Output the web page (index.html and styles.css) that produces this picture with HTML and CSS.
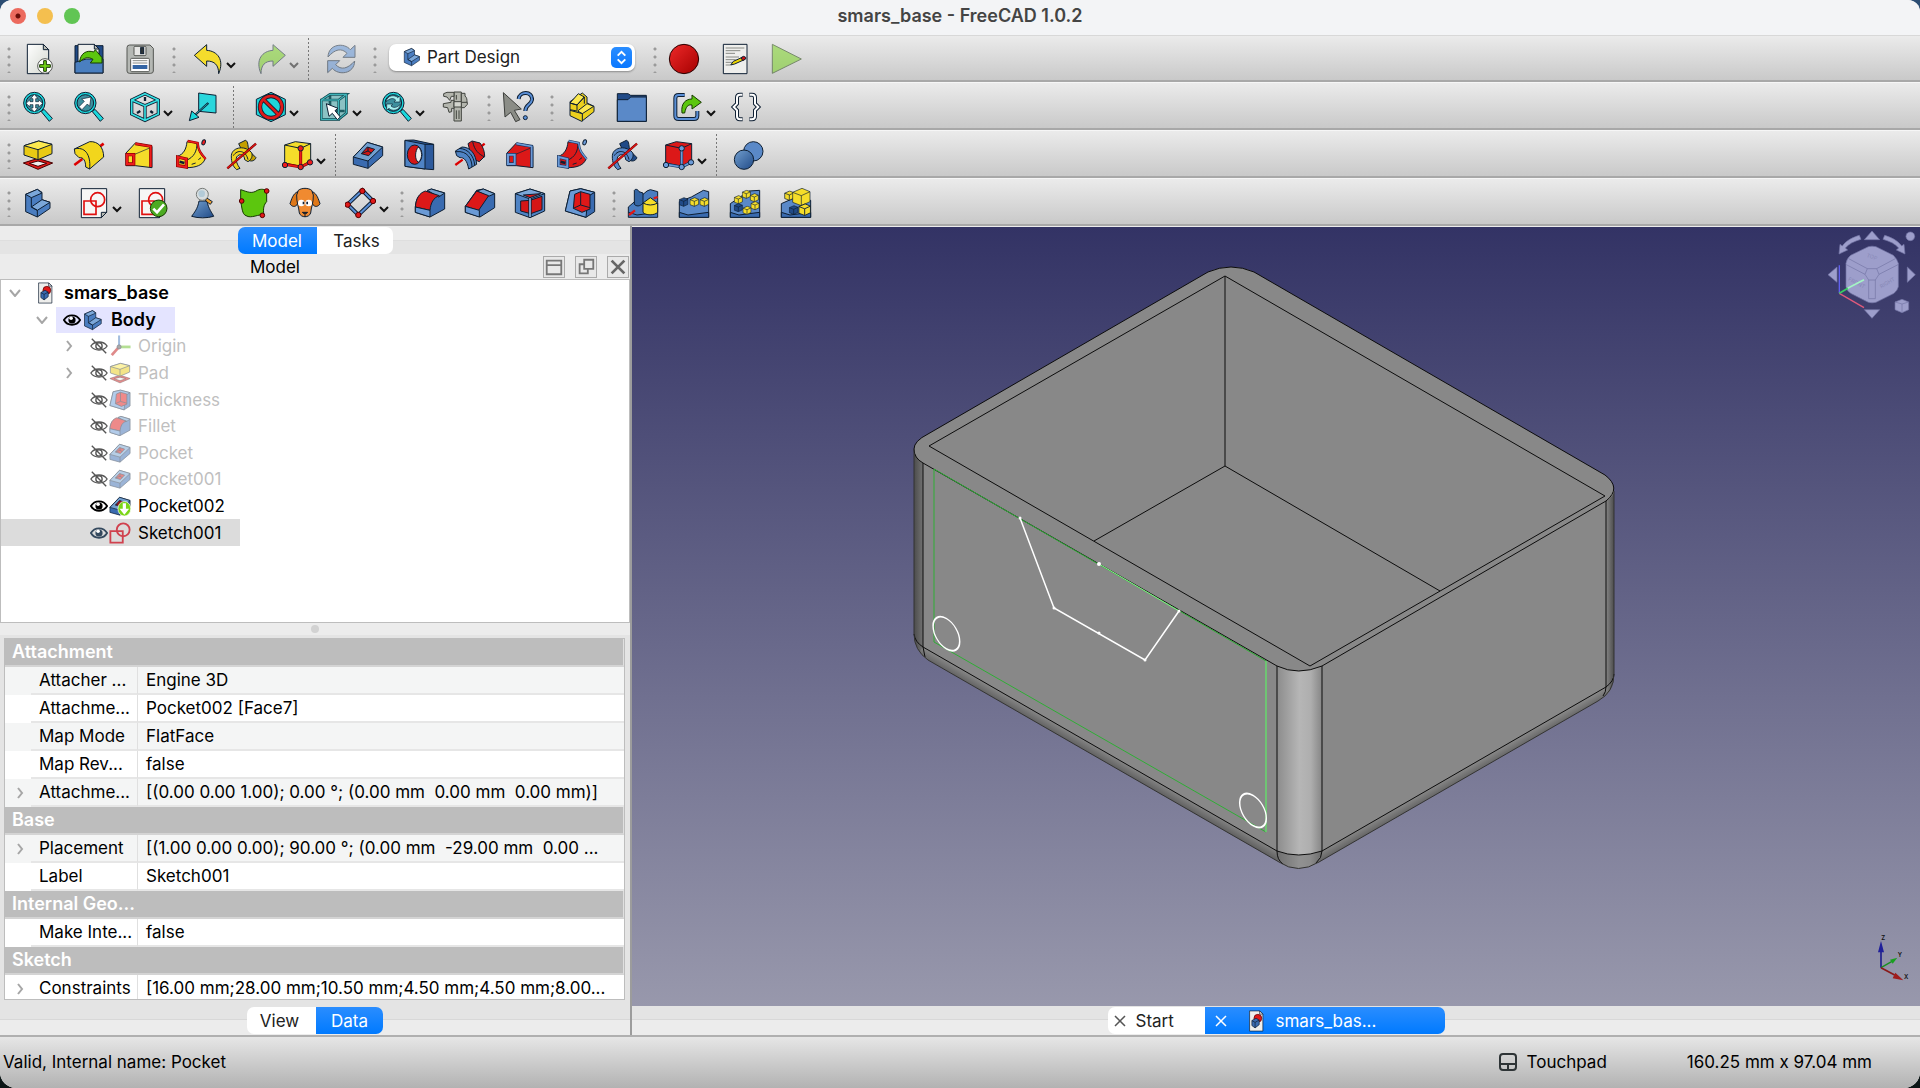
FILE: index.html
```html
<!DOCTYPE html>
<html lang="en">
<head>
<meta charset="utf-8">
<title>smars_base - FreeCAD 1.0.2</title>
<link rel="stylesheet" href="styles.css">
</head>
<body>
<svg class="sprite" aria-hidden="true">
  <defs>
    <linearGradient id="corner" x1="0" x2="1" y1="0" y2="0"><stop offset="0" stop-color="#8c8c8c"/><stop offset=".5" stop-color="#b6b6b6"/><stop offset=".75" stop-color="#aeaeae"/><stop offset="1" stop-color="#868686"/></linearGradient>
    <linearGradient id="edge-left" x1="0" x2="1" y1="0" y2="0"><stop offset="0" stop-color="#4c4c4c"/><stop offset="1" stop-color="#868686"/></linearGradient>
    <linearGradient id="edge-right" x1="0" x2="1" y1="0" y2="0"><stop offset="0" stop-color="#868686"/><stop offset="1" stop-color="#4c4c4c"/></linearGradient>
    <linearGradient id="foot-left" gradientUnits="userSpaceOnUse" x1="1100" y1="748" x2="1092" y2="762"><stop offset="0" stop-color="#888"/><stop offset="1" stop-color="#484848"/></linearGradient>
    <linearGradient id="foot-right" gradientUnits="userSpaceOnUse" x1="1462" y1="770" x2="1470" y2="784"><stop offset="0" stop-color="#888"/><stop offset="1" stop-color="#484848"/></linearGradient>
    <linearGradient id="blue" x1="0" x2="1" y1="0" y2="1"><stop offset="0" stop-color="#729fcf"/><stop offset="1" stop-color="#204a87"/></linearGradient>
    <linearGradient id="silver" x1="0" x2="1" y1="0" y2="1"><stop offset="0" stop-color="#fff"/><stop offset="1" stop-color="#d3d7cf"/></linearGradient>
    <linearGradient id="red" x1="0" x2="1" y1="0" y2="1"><stop offset="0" stop-color="#ef2929"/><stop offset="1" stop-color="#a40000"/></linearGradient>
  </defs>

  <symbol id="new" viewBox="0 0 96 96"><path d="M16 4H64L80 20V92H16Z" fill="url(#silver)"/><path d="M64 4V20H80Z" fill="#babdb6"/><circle cx="69" cy="69" r="22" fill="#fff" stroke="#555753"/><path d="M65 53h8v12h12v8H73v12h-8V73H53v-8h12Z" fill="#73d216" stroke="#173a00"/></symbol>
  <symbol id="open" viewBox="0 0 96 96"><path d="M6 8H90V90H6Z" fill="#204a87"/><path d="M15 4H64L78 18V60H15Z" fill="#eeeeec"/><path d="M64 4V18H78Z" fill="#babdb6"/><path d="M6 58L40 48H90V90H6Z" fill="#4a7fc0"/><path d="M20 57C22 30 42 20 62 27L67 20 87 44V60H52L60 49C46 40 32 44 20 57Z" fill="#5cc60e" stroke="#173a00"/></symbol>
  <symbol id="save" viewBox="0 0 96 96"><path d="M9 14Q9 6 17 6H78L88 16V84Q88 91 80 91H17Q9 91 9 84Z" fill="#b5b8b4" stroke="#555753"/><rect x="30" y="10" width="36" height="28" rx="3" fill="#e6e6e4" stroke="#555753"/><rect x="50" y="14" width="9" height="18" fill="#2e3436"/><rect x="20" y="46" width="56" height="40" rx="3" fill="#fff" stroke="#555753"/><path d="M26 53H70M26 60H70" stroke="#888a85"/><path d="M26 66H70V78H26Z" fill="#3465a4" stroke="none"/></symbol>
  <symbol id="undo" viewBox="0 0 96 96"><path d="M7 37L44 5V22C76 24 98 50 80 92C80 66 68 54 44 54V70Z" fill="#f4dc2c"/></symbol>
  <symbol id="redo" viewBox="0 0 96 96"><path d="M91 37L54 5V22C22 24 0 50 18 92C18 66 30 54 54 54V70Z" fill="#73d216"/></symbol>
  <symbol id="refresh" viewBox="0 0 96 96"><path d="M9 42C10 2 58-2 76 20L90 7V43H54L66 31C50 14 30 18 9 42Z" fill="#5a8fd6"/><path d="M9 42C10 2 58-2 76 20L90 7V43H54L66 31C50 14 30 18 9 42Z" transform="rotate(180 49 48)" fill="#5a8fd6"/></symbol>
  <symbol id="record" viewBox="0 0 96 96"><circle cx="48" cy="48" r="44" fill="url(#red)" stroke="#280000"/></symbol>
  <symbol id="macro" viewBox="0 0 96 96"><path d="M13 4H84V92H13Z" fill="#eeeeec"/><path d="M20 15H76M20 23H64M20 31H48M20 42H60M20 50H50M20 58H40M20 66H34" stroke="#888a85"/><path d="M35 66L43 55 72 42 76 50 47 63Z" fill="#edd400"/><path d="M66 44L74 40 80 43V48L71 53Z" fill="#cc1010"/></symbol>
  <symbol id="play" viewBox="0 0 96 96"><path d="M7 4L94 48 7 91Z" fill="#73d216" stroke="#173a00"/></symbol>

  <symbol id="lens" viewBox="0 0 96 96"><path d="M58 62L66 55 91 82 82 91Z" fill="#1ad8dc"/><circle cx="37" cy="36" r="32" fill="#1ad8dc"/><circle cx="37" cy="36" r="25" fill="#3d8f9e"/></symbol>
  <symbol id="fit-all" viewBox="0 0 96 96"><use href="#lens"/><path d="M37 10L48 23H41V32H50V26L62 37 50 48V41H41V51H48L37 63 26 51H33V41H24V48L12 37 24 26V32H33V23H26Z" fill="#fff" stroke-width="2"/></symbol>
  <symbol id="fit-sel" viewBox="0 0 96 96"><use href="#lens"/><path d="M18 47L34 31 26 24 54 18 50 46 43 39 27 56Z" fill="#fff" stroke-width="2"/></symbol>
  <symbol id="iso" viewBox="0 0 96 96"><g fill="none" stroke-width="10"><path d="M48 8L88 27V69L48 88 8 69V27ZM8 27L48 44 88 27M48 44V88"/></g><g fill="none" stroke="#34e0e2" stroke-width="5"><path d="M48 8L88 27V69L48 88 8 69V27ZM8 27L48 44 88 27M48 44V88"/></g><path d="M48 18V30M24 66L34 60M64 60L72 66" stroke-width="7"/></symbol>
  <symbol id="go-link" viewBox="0 0 96 96"><path d="M35 6L87 13V66L35 61Z" fill="#2ad6dc"/><path d="M64 36L24 72" stroke-width="7"/><path d="M62 38L24 71" stroke="#2ad6dc" stroke-width="2"/><path d="M7 89L14 60 36 79Z" fill="#1ad8dc"/></symbol>
  <symbol id="style" viewBox="0 0 96 96"><path d="M48 4L91 25V71L48 92 4 71V25Z" fill="#1fd5da"/><circle cx="48" cy="48" r="33" fill="none" stroke-width="13"/><path d="M26 26L70 70" stroke-width="13"/><circle cx="48" cy="48" r="33" fill="none" stroke="#dd1a1a" stroke-width="8"/><path d="M26 26L70 70" stroke="#dd1a1a" stroke-width="8"/></symbol>
  <symbol id="bbox" viewBox="0 0 96 96"><path d="M8 26L36 7H87V68L64 87H8Z" fill="#8bc2c4" stroke-width="2"/><g fill="none" stroke-width="8" stroke="#1c5a60"><path d="M10 27H62V85H10ZM10 27L36 10H85L62 27M85 10V66L62 85M36 12V60H80"/></g><g fill="none" stroke-width="3" stroke="#46c5ca"><path d="M10 27H62V85H10ZM10 27L36 10H85L62 27M85 10V66L62 85"/></g><path d="M25 38L60 52 51 59 67 78 58 86 43 67 33 76Z" fill="#fff"/></symbol>
  <symbol id="sync" viewBox="0 0 96 96"><use href="#lens"/><g fill="#a6f0f0" stroke-width="2"><path d="M16 32C18 12 42 10 50 20L57 14V33H39L44 27C36 20 26 22 16 32Z"/><path d="M16 32C18 12 42 10 50 20L57 14V33H39L44 27C36 20 26 22 16 32Z" transform="rotate(180 37 36)"/></g></symbol>
  <symbol id="caliper" viewBox="0 0 96 96"><g fill="#b4b6ae" stroke="#41443f"><path d="M45 3H67V90H45Z"/><path d="M14 8L24 4H45V16H37L32 28 24 18 14 16Z"/><path d="M67 7H78V15C84 20 84 26 84 34L76 38H67Z"/><path d="M13 38L36 34V28H45V52H38V62L30 64 26 50 13 48Z"/><path d="M67 34H85V40L76 50H67Z"/><path d="M45 32H67V48H45Z" fill="#d3d5ce"/></g><path d="M52 12V26M52 58V84M60 58V84" stroke="#41443f"/></symbol>
  <symbol id="part" viewBox="0 0 96 96"><path d="M15 32L52 6 66 18V36L87 46V62L50 91 15 74Z" fill="#ecd01c"/><path d="M15 36L40 8 58 18 36 42ZM38 60L66 38 86 46 52 68Z" fill="#fce94f"/><path d="M15 36L36 42V58M36 42L58 18V38M15 58L52 68V91M15 56L36 60" fill="none"/></symbol>
  <symbol id="folder" viewBox="0 0 96 96"><path d="M4 8H36L44 13H91V91H4Z" fill="#204a87"/><path d="M4 26H36L44 18H91V91H4Z" fill="#5a89c8"/></symbol>
  <symbol id="link" viewBox="0 0 96 96"><path d="M38 12H20Q10 12 10 22V74Q10 84 20 84H66Q76 84 76 74V60" fill="none" stroke-width="12"/><path d="M38 12H20Q10 12 10 22V74Q10 84 20 84H66Q76 84 76 74V60" fill="none" stroke="#5a8fd6" stroke-width="6"/><path d="M30 66C26 36 42 24 60 24V12L88 34 60 54V42C48 40 42 46 38 66Z" fill="#5cc60e" stroke="#173a00"/></symbol>

  <symbol id="pad" viewBox="0 0 96 96"><path d="M4 72L48 58 92 72 48 91Z" fill="#e01818" stroke="#400"/><path d="M22 73L48 66 74 73 48 82Z" fill="#eee" stroke="#400"/><path d="M6 20L50 6 90 16V44L48 62 6 48Z" fill="#e9ca14"/><path d="M6 20L50 6 90 16 48 32Z" fill="#fce94f"/><path d="M48 32V62"/></symbol>
  <symbol id="revolve" viewBox="0 0 96 96"><path d="M92 14L62 36" stroke="#d00" stroke-width="8"/><path d="M4 30L50 8C76 6 92 26 92 54L50 90L38 84C38 66 32 54 18 56L6 44Z" fill="#f2d61c"/><path d="M4 30C34 22 54 44 50 90" fill="none"/><path d="M4 78L28 60" stroke="#d00" stroke-width="8"/></symbol>
  <symbol id="loft" viewBox="0 0 96 96"><path d="M6 42L34 12 84 22V86L34 80H6Z" fill="var(--body)"/><path d="M32 46L84 24" stroke-width="2"/><path d="M34 14L80 22V84" fill="none" stroke="var(--rim-dark)" stroke-width="9"/><path d="M34 14L80 22V84" fill="none" stroke="var(--rim)" stroke-width="5"/><path d="M9 47H29V75H9Z" fill="var(--body)" stroke="var(--rim-dark)" stroke-width="10"/><path d="M9 47H29V75H9Z" fill="none" stroke="var(--rim)" stroke-width="6"/></symbol>
  <symbol id="pipe" viewBox="0 0 96 96"><path d="M7 52C26 46 34 30 36 8L66 12C70 36 78 46 90 60C84 78 64 86 34 86L6 80Z" fill="var(--body)"/><path d="M34 64C58 54 66 36 66 12M50 76L62 72M70 62L78 56" fill="none"/><path d="M38 6L68 12C70 36 78 44 92 60" fill="none" stroke="var(--rim-dark)" stroke-width="7"/><path d="M38 6L68 12C70 36 78 44 92 60" fill="none" stroke="var(--rim)" stroke-width="4"/><path d="M8 54L34 60V84L8 80Z" fill="var(--body)" stroke="var(--rim-dark)" stroke-width="10"/><path d="M8 54L34 60V84L8 80Z" fill="none" stroke="var(--rim)" stroke-width="6"/><path d="M14 68L28 72" stroke-width="8"/><ellipse cx="86" cy="10" rx="5" ry="8" transform="rotate(20 86 10)" fill="var(--rim)"/></symbol>
  <symbol id="helix" viewBox="0 0 96 96"><path d="M38 14L58 4C68 6 64 24 70 36L90 56C86 66 76 68 68 64L58 40C48 34 42 24 38 14Z" fill="var(--coil-dark)"/><path d="M16 54C14 26 54 16 76 40C82 50 76 62 66 68L56 62C56 46 40 42 32 54C28 64 34 78 42 88L32 92C20 82 16 68 16 54Z" fill="var(--coil)"/><path d="M22 50C34 30 60 34 66 62" fill="none"/><path d="M4 88L90 14" stroke="#6a0000" stroke-width="7"/><path d="M4 88L90 14" stroke="#e21515" stroke-width="4"/></symbol>
  <symbol id="prim" viewBox="0 0 96 96"><path d="M8 18L40 8 86 14V66L56 82 8 72Z" fill="var(--body)"/><path d="M8 18L56 28 86 14M56 28V82" fill="none"/><path d="M9 76L56 84 84 70M56 26V84" fill="none" stroke="var(--rim-dark)" stroke-width="9"/><path d="M9 76L56 84 84 70M56 26V84" fill="none" stroke="var(--rim)" stroke-width="5"/><g fill="var(--rim)"><circle cx="9" cy="78" r="8"/><circle cx="56" cy="84" r="8"/><circle cx="84" cy="70" r="8"/><circle cx="56" cy="28" r="8"/></g></symbol>
  <symbol id="pocket" viewBox="0 0 96 96"><path d="M4 54L46 10 92 24V50L48 88 4 76Z" fill="#3a6bb0"/><path d="M4 54L46 10 92 24 48 66Z" fill="#729fcf"/><path d="M48 66V88"/><path d="M28 44L46 24 68 31 50 50Z" fill="#d01414"/><path d="M48 24V36L28 44M48 36L58 42" fill="none"/></symbol>
  <symbol id="hole" viewBox="0 0 96 96"><path d="M6 4L32 3 92 16V92L66 90 6 82Z" fill="#2d5a9c"/><path d="M6 4L66 16V90L6 82Z" fill="#4f83c4"/><path d="M66 16H92"/><ellipse cx="35" cy="47" rx="22" ry="29" fill="#d51616"/><path d="M46 24C36 34 34 62 46 70C60 58 58 34 46 24Z" fill="#eee"/></symbol>
  <symbol id="groove" viewBox="0 0 96 96"><path d="M92 14L70 32" stroke="#d00" stroke-width="7"/><path d="M42 14L54 6 78 12C88 24 92 40 92 52L76 68C68 64 60 62 54 60Z" fill="#d51616"/><path d="M56 8C62 34 72 44 92 54" fill="none"/><path d="M4 36L24 24C50 24 66 46 68 76L44 90C40 66 30 54 18 56L8 50Z" fill="#4f83c4"/><path d="M6 38C40 34 54 60 54 84M16 28C44 30 60 52 62 78" fill="none"/><path d="M4 78L26 62" stroke="#d00" stroke-width="7"/></symbol>
  <symbol id="boolean" viewBox="0 0 96 96"><circle cx="61" cy="37" r="29" fill="#5a89c8"/><circle cx="33" cy="62" r="29" fill="url(#blue)"/></symbol>

  <symbol id="body" viewBox="0 0 96 96"><path d="M11 22L46 7 60 16V38L84 46V64L46 90 11 74Z" fill="#4a7dc0"/><path d="M11 22L28 32 60 18 46 7ZM28 60L60 38 84 46 46 70Z" fill="#7ba7d9"/><path d="M28 32V60L46 70V90" fill="none"/></symbol>
  <symbol id="sheet" viewBox="0 0 96 96"><path d="M10 5H86V76L70 92H10Z" fill="#f6f6f5"/><path d="M70 92V76H86Z" fill="#babdb6"/><path d="M18 42H54V82H18Z" fill="none" stroke="#e01010" stroke-width="5"/><circle cx="59" cy="38" r="21" fill="none" stroke="#e01010" stroke-width="5"/></symbol>
  <symbol id="check-sketch" viewBox="0 0 96 96"><use href="#sheet"/><circle cx="68" cy="64" r="25" fill="#4cab22" stroke="#173a00"/><path d="M52 65L63 76 84 52" fill="none" stroke="#fff" stroke-width="8"/></symbol>
  <symbol id="map" viewBox="0 0 96 96"><path d="M36 42H60C64 66 76 78 80 88C60 94 34 94 14 88C22 76 32 66 36 42Z" fill="url(#blue)"/><path d="M58 32L76 44 70 52 56 42Z" fill="#f0a030"/><circle cx="46" cy="22" r="18" fill="#d8dee0" stroke="#777b78"/><circle cx="44" cy="20" r="10" fill="#b3cbd8" stroke="none"/></symbol>
  <symbol id="binder" viewBox="0 0 96 96"><path d="M8 8C28 14 40 22 58 10C70 4 80 8 86 10V44C78 52 74 66 78 84C62 80 40 96 24 86C12 82 12 60 8 44Z" fill="#5cc60e" stroke="#173a00"/><g fill="#e01818" stroke="#500"><circle cx="86" cy="12" r="7"/><circle cx="11" cy="42" r="7"/><circle cx="73" cy="85" r="7"/></g></symbol>
  <symbol id="clone" viewBox="0 0 96 96"><path d="M26 14C12 20 8 36 3 50C8 60 20 62 26 50ZM70 14C84 20 88 36 93 50C88 60 76 62 70 50Z" fill="#e07818"/><path d="M28 10C38 2 58 2 68 10L73 24C74 46 66 62 65 78C60 93 36 93 31 78C30 62 22 46 23 24Z" fill="#f08a30"/><g fill="#fff" stroke="none"><circle cx="37" cy="48" r="10"/><circle cx="59" cy="48" r="10"/></g><path d="M41 48h5M52 48h5" stroke-width="7"/><path d="M40 76Q48 86 56 76ZM48 82V90" fill="#3a1a00"/></symbol>
  <symbol id="datum" viewBox="0 0 96 96"><path d="M8 52L52 10 84 42 40 84Z" fill="none" stroke-width="12"/><path d="M8 52L52 10 84 42 40 84Z" fill="none" stroke="#5a8fd6" stroke-width="6"/><g fill="#e01818" stroke="#500"><circle cx="8" cy="53" r="8"/><circle cx="52" cy="12" r="8"/><circle cx="84" cy="42" r="8"/><circle cx="40" cy="84" r="8"/></g></symbol>
  <symbol id="fillet" viewBox="0 0 96 96"><path d="M4 60C6 34 16 20 30 18L52 6 92 18V66L48 90 4 76Z" fill="#3a6bb0"/><path d="M40 10L52 6 92 18 74 30Z" fill="#729fcf"/><path d="M4 60C6 34 16 18 34 12L76 26C58 32 50 48 48 70Z" fill="#dc1818"/><path d="M4 60L48 70V90L4 76Z" fill="#6a9ad6"/></symbol>
  <symbol id="chamfer" viewBox="0 0 96 96"><path d="M4 58L38 10 58 6 92 20V62L48 90 4 76Z" fill="#3a6bb0"/><path d="M38 12L58 6 92 20 74 28Z" fill="#729fcf"/><path d="M4 58L38 12 74 26 44 70Z" fill="#dc1818"/><path d="M4 58L46 70V90L4 76Z" fill="#6a9ad6"/></symbol>
  <symbol id="draft" viewBox="0 0 96 96"><path d="M4 20L48 6 92 20V72L48 92 4 76Z" fill="#4f83c4"/><path d="M20 42L48 40 84 28V68L50 80 20 72Z" fill="#d51616"/><path d="M4 20L48 36 92 20 48 6Z" fill="#7ba7d9"/><path d="M28 24L80 20 48 32Z" fill="#d51616"/><path d="M48 36V90" stroke-width="10"/><path d="M48 34V90" stroke="#8cb4e0" stroke-width="5"/></symbol>
  <symbol id="thickness" viewBox="0 0 96 96"><path d="M18 12L50 5 92 16V74L66 91 4 72Z" fill="#3a6bb0"/><path d="M18 12L50 5 92 16 72 28L66 91 4 72Z" fill="#6a9ad6"/><path d="M32 22L50 14 78 22V66L54 76 28 64Z" fill="#e01818"/><path d="M50 14V54L28 64M50 54L78 62" fill="none"/></symbol>
  <symbol id="mirror" viewBox="0 0 96 96"><path d="M4 60L60 12 70 8 92 14V91H4Z" fill="#4a7dc0"/><path d="M4 76L30 84 92 76" fill="none"/><path d="M22 10C26 4 34 8 36 14L48 18V48C38 60 28 58 22 52Z" fill="#3465a4"/><path d="M6 84L24 70M80 34L92 30" stroke="#e01818" stroke-width="7"/><path d="M48 48L70 32 92 48V76C82 86 56 86 48 76Z" fill="#f5dd2a"/><path d="M48 48Q70 60 92 48" fill="none"/></symbol>
  <symbol id="cube" viewBox="0 0 30 30"><path d="M2 8L16 2 28 7V22L15 28 2 23Z"/><path d="M2 8L15 13 28 7M15 13V28" fill="none"/></symbol>
  <symbol id="linear" viewBox="0 0 96 96"><path d="M4 44L40 30 76 10 92 14V91H4Z" fill="#5a89c8"/><path d="M4 76L30 84 92 76V91H4Z" fill="#3a6bb0"/><g stroke-width="2"><use href="#cube" x="2" y="30" width="30" height="30" fill="#204a87"/><use href="#cube" x="34" y="30" width="30" height="30" fill="#f5dd2a"/><use href="#cube" x="64" y="30" width="30" height="30" fill="#f5dd2a"/></g></symbol>
  <symbol id="polar" viewBox="0 0 96 96"><path d="M4 50L60 12 92 10V91H4Z" fill="#5a89c8"/><path d="M4 76L30 84 92 76V91H4Z" fill="#3a6bb0"/><g fill="#f5dd2a" stroke-width="2"><use href="#cube" x="38" y="8" width="28" height="28"/><use href="#cube" x="14" y="24" width="28" height="28"/><use href="#cube" x="62" y="18" width="28" height="28"/><use href="#cube" x="64" y="42" width="28" height="28"/><use href="#cube" x="40" y="56" width="28" height="28"/><use href="#cube" x="14" y="48" width="28" height="28" fill="#204a87"/></g></symbol>
  <symbol id="multi" viewBox="0 0 96 96"><path d="M4 50L40 34 92 40V91H4Z" fill="#5a89c8"/><path d="M4 76L30 84 92 76V91H4Z" fill="#3a6bb0"/><g fill="#f5dd2a" stroke-width="2"><use href="#cube" x="12" y="10" width="32" height="32"/><use href="#cube" x="34" y="0" width="60" height="60" stroke-width="1"/><use href="#cube" x="54" y="48" width="40" height="40"/><use href="#cube" x="26" y="54" width="30" height="30" fill="#204a87"/></g></symbol>

  <symbol id="doc" viewBox="0 0 96 96"><path d="M20 4H64L78 18V92H20Z" fill="#eeeeec"/><path d="M64 4V18H78Z" fill="#fff"/><circle cx="56" cy="36" r="17" fill="#e01818" stroke="#500"/><path d="M30 46L48 36 62 44V64L44 78 30 68Z" fill="#3a6bb0"/><path d="M30 46L44 54 62 44M44 54V78" fill="none"/></symbol>
  <symbol id="origin" viewBox="0 0 96 96"><path d="M44 52V2" stroke="#4a7dc0" stroke-width="9"/><path d="M44 52H94" stroke="#6cc02c" stroke-width="12"/><path d="M44 52L12 88" stroke="#c01818" stroke-width="12"/><circle cx="44" cy="52" r="9" fill="#555"/></symbol>
  <symbol id="tip" viewBox="0 0 96 96"><use href="#pocket"/><ellipse cx="67" cy="60" rx="28" ry="32" fill="#7bd616" stroke="#fff"/><path d="M60 36H74V60H88L67 86 46 60H60Z" fill="#fff" stroke="none"/></symbol>
  <symbol id="sketch" viewBox="0 0 96 96"><path d="M6 40H60V90H6Z" fill="none" stroke="#d0414e" stroke-width="8"/><circle cx="62" cy="34" r="28" fill="none" stroke="#d0414e" stroke-width="8"/></symbol>
  <symbol id="eye" viewBox="0 0 20 16"><path d="M1 8C5 1 15 1 19 8C15 15 5 15 1 8Z" fill="none" stroke="currentColor" stroke-width="2"/><circle cx="10" cy="8" r="4" fill="currentColor" stroke="none"/><circle cx="9" cy="6" r="2" fill="#fff" stroke="none"/></symbol>
  <symbol id="eye-off" viewBox="0 0 20 16"><path d="M1 8C5 2 15 2 19 8C15 14 5 14 1 8Z" fill="none" stroke="#555" stroke-width="1.5"/><circle cx="10" cy="8" r="3.5" fill="none" stroke="#555" stroke-width="1.5"/><path d="M2 0L18 16" stroke="#555" stroke-width="1.5"/></symbol>
  <symbol id="down" viewBox="0 0 10 8"><path d="M1 2L5 6 9 2" fill="none" stroke="currentColor" stroke-width="2"/></symbol>
  <symbol id="right" viewBox="0 0 8 12"><path d="M2 1L6 6 2 11" fill="none" stroke="#a6a6a6" stroke-width="2"/></symbol>
  <symbol id="open-branch" viewBox="0 0 12 8"><path d="M1 1L6 7 11 1" fill="none" stroke="#a6a6a6" stroke-width="2"/></symbol>
  <symbol id="close" viewBox="0 0 12 12"><path d="M1 1L11 11M11 1L1 11" fill="none" stroke="currentColor" stroke-width="1.5"/></symbol>
</svg>

<div class="window">
  <header class="titlebar">
    <div class="lights">
      <button class="light light-close" aria-label="Close window"></button>
      <button class="light light-min" aria-label="Minimize window"></button>
      <button class="light light-max" aria-label="Zoom window"></button>
    </div>
    <h1>smars_base - FreeCAD 1.0.2</h1>
  </header>

  <div class="toolbars">
    <div class="bar">
      <i class="grip"></i>
      <button class="tool" aria-label="New"><svg><use href="#new"/></svg></button>
      <button class="tool" aria-label="Open"><svg><use href="#open"/></svg></button>
      <button class="tool" aria-label="Save"><svg><use href="#save"/></svg></button>
      <i class="grip"></i>
      <button class="tool drop" aria-label="Undo"><svg><use href="#undo"/></svg><svg class="caret"><use href="#down"/></svg></button>
      <button class="tool drop off" aria-label="Redo" disabled><svg><use href="#redo"/></svg><svg class="caret"><use href="#down"/></svg></button>
      <i class="rule"></i>
      <button class="tool off" aria-label="Refresh" disabled><svg><use href="#refresh"/></svg></button>
      <i class="grip"></i>
      <div class="workbench">
        <svg class="workbench-icon"><use href="#body"/></svg>
        <select aria-label="Workbench"><option>Part Design</option></select>
        <span class="stepper"><svg viewBox="0 0 22 22"><path d="M7 9L11 5 15 9M7 13L11 17 15 13" fill="none" stroke="#fff" stroke-width="2"/></svg></span>
      </div>
      <i class="grip"></i>
      <button class="tool" aria-label="Record macro"><svg><use href="#record"/></svg></button>
      <button class="tool" aria-label="Macros"><svg><use href="#macro"/></svg></button>
      <button class="tool off" aria-label="Execute macro" disabled><svg><use href="#play"/></svg></button>
    </div>
    <div class="bar">
      <i class="grip"></i>
      <button class="tool" aria-label="Fit all"><svg><use href="#fit-all"/></svg></button>
      <button class="tool" aria-label="Fit selection"><svg><use href="#fit-sel"/></svg></button>
      <button class="tool drop" aria-label="Isometric"><svg><use href="#iso"/></svg><svg class="caret"><use href="#down"/></svg></button>
      <button class="tool" aria-label="Go to linked object"><svg><use href="#go-link"/></svg></button>
      <i class="rule"></i>
      <button class="tool drop" aria-label="Draw style"><svg><use href="#style"/></svg><svg class="caret"><use href="#down"/></svg></button>
      <button class="tool drop" aria-label="Selection view"><svg><use href="#bbox"/></svg><svg class="caret"><use href="#down"/></svg></button>
      <button class="tool drop" aria-label="Sync view"><svg><use href="#sync"/></svg><svg class="caret"><use href="#down"/></svg></button>
      <button class="tool" aria-label="Measure"><svg><use href="#caliper"/></svg></button>
      <i class="grip"></i>
      <button class="tool" aria-label="What's this?"><svg viewBox="0 0 96 96"><path d="M4 5L58 54 37 58 54 86 41 92 26 64 9 78Z" fill="#8b8d87" stroke="#3c3e3b"/><path d="M50 24C52 0 92 0 90 26C88 42 70 40 70 60" fill="none" stroke-width="12"/><path d="M50 24C52 0 92 0 90 26C88 42 70 40 70 60" fill="none" stroke="#5a8fd6" stroke-width="6"/><circle cx="70" cy="80" r="6" fill="#5a8fd6"/></svg></button>
      <i class="grip"></i>
      <button class="tool" aria-label="Create part"><svg><use href="#part"/></svg></button>
      <button class="tool" aria-label="Create group"><svg><use href="#folder"/></svg></button>
      <button class="tool drop" aria-label="Make link"><svg><use href="#link"/></svg><svg class="caret"><use href="#down"/></svg></button>
      <button class="tool" aria-label="Variable set"><svg viewBox="0 0 96 96"><g fill="none" stroke-width="12"><path d="M38 11H30Q21 11 21 20V38L11 48 21 58V76Q21 85 30 85H38M58 11H66Q75 11 75 20V38L85 48 75 58V76Q75 85 66 85H58"/></g><g fill="none" stroke="#fff" stroke-width="6"><path d="M37 11H30Q21 11 21 20V38L11 48 21 58V76Q21 85 30 85H37M59 11H66Q75 11 75 20V38L85 48 75 58V76Q75 85 66 85H59"/></g></svg></button>
    </div>
    <div class="bar">
      <i class="grip"></i>
      <button class="tool" aria-label="Pad"><svg><use href="#pad"/></svg></button>
      <button class="tool" aria-label="Revolution"><svg><use href="#revolve"/></svg></button>
      <button class="tool add" aria-label="Additive loft"><svg><use href="#loft"/></svg></button>
      <button class="tool add" aria-label="Additive pipe"><svg><use href="#pipe"/></svg></button>
      <button class="tool add" aria-label="Additive helix"><svg><use href="#helix"/></svg></button>
      <button class="tool drop add" aria-label="Additive primitive"><svg><use href="#prim"/></svg><svg class="caret"><use href="#down"/></svg></button>
      <i class="rule"></i>
      <button class="tool" aria-label="Pocket"><svg><use href="#pocket"/></svg></button>
      <button class="tool" aria-label="Hole"><svg><use href="#hole"/></svg></button>
      <button class="tool" aria-label="Groove"><svg><use href="#groove"/></svg></button>
      <button class="tool sub" aria-label="Subtractive loft"><svg><use href="#loft"/></svg></button>
      <button class="tool sub" aria-label="Subtractive pipe"><svg><use href="#pipe"/></svg></button>
      <button class="tool sub" aria-label="Subtractive helix"><svg><use href="#helix"/></svg></button>
      <button class="tool drop sub" aria-label="Subtractive primitive"><svg><use href="#prim"/></svg><svg class="caret"><use href="#down"/></svg></button>
      <i class="rule"></i>
      <button class="tool" aria-label="Boolean"><svg><use href="#boolean"/></svg></button>
    </div>
    <div class="bar">
      <i class="grip"></i>
      <button class="tool" aria-label="Create body"><svg><use href="#body"/></svg></button>
      <button class="tool drop" aria-label="Create sketch"><svg><use href="#sheet"/></svg><svg class="caret"><use href="#down"/></svg></button>
      <button class="tool" aria-label="Validate sketch"><svg><use href="#check-sketch"/></svg></button>
      <button class="tool" aria-label="Check geometry"><svg><use href="#map"/></svg></button>
      <button class="tool" aria-label="Sub-shape binder"><svg><use href="#binder"/></svg></button>
      <button class="tool" aria-label="Clone"><svg><use href="#clone"/></svg></button>
      <button class="tool drop" aria-label="Datum plane"><svg><use href="#datum"/></svg><svg class="caret"><use href="#down"/></svg></button>
      <i class="grip"></i>
      <button class="tool tight" aria-label="Fillet"><svg><use href="#fillet"/></svg></button>
      <button class="tool tight" aria-label="Chamfer"><svg><use href="#chamfer"/></svg></button>
      <button class="tool tight" aria-label="Draft"><svg><use href="#draft"/></svg></button>
      <button class="tool tight" aria-label="Thickness"><svg><use href="#thickness"/></svg></button>
      <i class="grip"></i>
      <button class="tool" aria-label="Mirrored"><svg><use href="#mirror"/></svg></button>
      <button class="tool" aria-label="Linear pattern"><svg><use href="#linear"/></svg></button>
      <button class="tool" aria-label="Polar pattern"><svg><use href="#polar"/></svg></button>
      <button class="tool" aria-label="MultiTransform"><svg><use href="#multi"/></svg></button>
    </div>
  </div>

  <main class="main">
    <aside class="dock">
      <div class="tabs tabs-top" role="tablist">
        <button class="tab active tab-model" role="tab">Model</button><button class="tab tab-tasks" role="tab">Tasks</button>
      </div>
      <div class="dock-title">
        <h2>Model</h2>
        <div class="dock-buttons">
          <button aria-label="Toggle overlay"><svg viewBox="0 0 22 22"><path d="M3 4H19V19H3ZM3 9H19" fill="none" stroke="#777" stroke-width="2"/></svg></button>
          <button aria-label="Float"><svg viewBox="0 0 22 22"><path d="M9 3H19V13H9ZM9 8H4V18H13V13" fill="none" stroke="#777" stroke-width="2"/></svg></button>
          <button aria-label="Close panel"><svg viewBox="0 0 22 22"><path d="M4 4L18 18M18 4L4 18" fill="none" stroke="#666" stroke-width="3"/></svg></button>
        </div>
      </div>
      <ul class="tree" role="tree">
        <li role="treeitem" aria-level="1" class="lvl1"><svg class="branch"><use href="#open-branch"/></svg><span class="node"><svg class="pic"><use href="#doc"/></svg><b>smars_base</b></span></li>
        <li role="treeitem" aria-level="2" class="lvl2"><svg class="branch"><use href="#open-branch"/></svg><span class="node activebody"><svg class="eye"><use href="#eye"/></svg><svg class="pic"><use href="#body"/></svg><b>Body</b></span></li>
        <li role="treeitem" aria-level="3" class="lvl3 hid"><svg class="branch"><use href="#right"/></svg><span class="node"><svg class="eye"><use href="#eye-off"/></svg><svg class="pic"><use href="#origin"/></svg>Origin</span></li>
        <li role="treeitem" aria-level="3" class="lvl3 hid"><svg class="branch"><use href="#right"/></svg><span class="node"><svg class="eye"><use href="#eye-off"/></svg><svg class="pic"><use href="#pad"/></svg>Pad</span></li>
        <li role="treeitem" aria-level="3" class="lvl3 hid"><i class="branch"></i><span class="node"><svg class="eye"><use href="#eye-off"/></svg><svg class="pic"><use href="#thickness"/></svg>Thickness</span></li>
        <li role="treeitem" aria-level="3" class="lvl3 hid"><i class="branch"></i><span class="node"><svg class="eye"><use href="#eye-off"/></svg><svg class="pic"><use href="#fillet"/></svg>Fillet</span></li>
        <li role="treeitem" aria-level="3" class="lvl3 hid"><i class="branch"></i><span class="node"><svg class="eye"><use href="#eye-off"/></svg><svg class="pic"><use href="#pocket"/></svg>Pocket</span></li>
        <li role="treeitem" aria-level="3" class="lvl3 hid"><i class="branch"></i><span class="node"><svg class="eye"><use href="#eye-off"/></svg><svg class="pic"><use href="#pocket"/></svg>Pocket001</span></li>
        <li role="treeitem" aria-level="3" class="lvl3"><i class="branch"></i><span class="node"><svg class="eye"><use href="#eye"/></svg><svg class="pic"><use href="#tip"/></svg>Pocket002</span></li>
        <li role="treeitem" aria-level="3" class="lvl3 selected"><i class="branch"></i><span class="node"><svg class="eye"><use href="#eye"/></svg><svg class="pic"><use href="#sketch"/></svg>Sketch001</span></li>
      </ul>
      <div class="splitter"><i></i></div>
      <div class="props">
        <div class="props-frame">
          <table>
            <colgroup><col class="c-exp"><col class="c-name"><col></colgroup>
            <tr class="group"><th colspan="3">Attachment</th></tr>
            <tr class="alt"><td></td><th>Attacher ...</th><td>Engine 3D</td></tr>
            <tr><td></td><th>Attachme...</th><td>Pocket002 [Face7]</td></tr>
            <tr class="alt"><td></td><th>Map Mode</th><td>FlatFace</td></tr>
            <tr><td></td><th>Map Rev...</th><td>false</td></tr>
            <tr class="alt"><td><svg class="expand"><use href="#right"/></svg></td><th>Attachme...</th><td>[(0.00 0.00 1.00); 0.00 °; (0.00 mm &nbsp;0.00 mm &nbsp;0.00 mm)]</td></tr>
            <tr class="group"><th colspan="3">Base</th></tr>
            <tr class="alt"><td><svg class="expand"><use href="#right"/></svg></td><th>Placement</th><td>[(1.00 0.00 0.00); 90.00 °; (0.00 mm &nbsp;-29.00 mm &nbsp;0.00 ...</td></tr>
            <tr><td></td><th>Label</th><td>Sketch001</td></tr>
            <tr class="group"><th colspan="3">Internal Geo...</th></tr>
            <tr><td></td><th>Make Inte...</th><td>false</td></tr>
            <tr class="group"><th colspan="3">Sketch</th></tr>
            <tr><td><svg class="expand"><use href="#right"/></svg></td><th>Constraints</th><td>[16.00 mm;28.00 mm;10.50 mm;4.50 mm;4.50 mm;8.00...</td></tr>
          </table>
        </div>
      </div>
      <div class="tabs tabs-bottom" role="tablist">
        <button class="tab tab-view" role="tab">View</button><button class="tab active tab-data" role="tab">Data</button>
      </div>
    </aside>

    <section class="mdi">
      <div class="viewport">
        <svg class="scene" viewBox="632 227 1288 779" preserveAspectRatio="xMidYMid meet">
          <!-- silhouette -->
          <path d="M914 449V634Q914 650 928 660L1279 862Q1298 875 1319 862L1598 701Q1614 692 1614 674V491Q1614 482 1605 475L1254 272Q1231 262 1208 272L928 434Q914 441 914 449Z" fill="#888"/>
          <!-- rounded vertical and bottom edges -->
          <path d="M914 449Q914 458 923 463V650L928 660Q914 650 914 634Z" fill="url(#edge-left)"/>
          <path d="M1606 501Q1614 496 1614 491V674Q1614 690 1606 695Z" fill="url(#edge-right)"/>
          <path d="M923 647L1277 851 1279 862 928 660Q922 656 920 651Z" fill="url(#foot-left)"/>
          <path d="M1322 851L1606 687 1608 694 1598 701 1319 862Z" fill="url(#foot-right)"/>
          <path d="M1277 666Q1298 676 1322 666V851L1319 862Q1298 875 1279 862L1277 851Z" fill="url(#corner)"/>
          <path d="M1277 851Q1298 859 1322 851L1319 862Q1298 875 1279 862Z" fill="#000" fill-opacity=".2"/>
          <g class="line">
            <path d="M914 449Q914 441 928 434L1208 272Q1231 262 1254 272L1605 475Q1622 488 1606 501L1322 666Q1298 676 1277 666L923 463Q914 458 914 449Z"/>
            <path d="M929 446L1225 276 1605 496 1310 666Z"/>
            <path d="M1225 276V466M1094 541L1225 466 1440 591"/>
            <path d="M923 463V647L925 657M1277 666V851Q1277 860 1283 864M1322 666V851Q1322 858 1316 863M1606 501V687Q1606 692 1603 696"/>
            <path d="M914 634Q915 642 923 647L1277 851Q1298 859 1322 851L1606 687Q1614 681 1614 674"/>
            <path d="M914 449V634Q914 650 928 660L1279 862Q1298 875 1319 862L1598 701Q1614 692 1614 674V491" class="outline"/>
          </g>
          <path d="M934 469L1266 661V832L934 642Z" fill="none" stroke="#2fae35" stroke-width="1"/>
          <path d="M1099 564L1179 611M1266 661V832" fill="none" stroke="#84ee88" stroke-width="1"/>
          <path d="M1020 518L1054 608 1145 660 1179 611" fill="none" stroke="#fff" stroke-width="1.5"/>
          <g fill="#fff"><circle cx="1020" cy="518" r="1.5"/><circle cx="1054" cy="608" r="1.5"/><circle cx="1145" cy="660" r="1.5"/><circle cx="1179" cy="611" r="1.5"/><circle cx="1099" cy="564" r="2"/><circle cx="1099" cy="633" r="1.5"/></g>
          <g fill="none" stroke="#fff" stroke-width="1.5"><circle r="13.3" transform="matrix(1 .572 0 1.143 946.4 633.7)"/><circle r="13.3" transform="matrix(1 .572 0 1.143 1253 810.5)"/></g>
        </svg>
        <svg class="navcube" viewBox="138 21 282 291">
          <g fill="#9d9ecb" stroke="#7374a4" stroke-width="2">
            <path d="M276 33L299 59H253ZM276 295L299 269H253ZM144 164L171 141V187ZM406 164L382 141V187Z"/>
            <path d="M238 46L243 58C222 64 206 72 196 84L203 90 177 102 180 73 187 78C198 62 218 52 238 46ZM314 46L309 58C330 64 346 72 356 84L349 90 375 102 372 73 365 78C354 62 334 52 314 46Z"/>
            <circle cx="391" cy="49" r="13"/>
            <path d="M345 246L366 238 386 246V269L366 278 345 269Z"/><path d="M345 246L366 252 386 246M366 252V278" fill="none"/>
            <path d="M265 80Q276 77 288 80L340 106Q352 118 355 130V200Q352 212 342 220L288 247Q276 250 265 247L212 220Q199 210 198 200V130Q200 116 212 106Z"/>
            <path d="M262 146H290L297 163 286 180H266L255 163ZM262 146L206 116M255 163L199 134M290 146L346 116M297 163L354 134M266 180V236M286 180V236M266 236H286" fill="none"/>
          </g>
          <g class="facename"><text x="276" y="116" text-anchor="middle" transform="rotate(20 276 110)">TOP</text><text x="230" y="194" text-anchor="middle" transform="rotate(28 230 188)">FRONT</text><text x="322" y="194" text-anchor="middle" transform="rotate(-30 322 188)">RIGHT</text></g>
          <path d="M178 220V136" stroke="#6060ee" stroke-width="4"/><path d="M178 220L252 263" stroke="#e05a7c" stroke-width="4"/><path d="M178 220L205 204" stroke="#38d060" stroke-width="5"/><path d="M203 205L252 179" stroke="#a4f4c4" stroke-width="5"/>
        </svg>
        <svg class="axes" viewBox="60 70 180 180">
          <path d="M123 174V124" stroke="#20208c" stroke-width="5"/><path d="M123 94L132 128H114Z" fill="#20209a"/>
          <path d="M123 174L156 155" stroke="#189020" stroke-width="4"/><path d="M172 144L158 162 150 150Z" fill="#18a020"/>
          <path d="M123 174L164 196" stroke="#8a1a1a" stroke-width="5"/><path d="M190 212L158 206 166 189Z" fill="#a01c1c"/>
          <g class="axisname"><text x="124" y="91">Z</text><text x="173" y="141">Y</text><text x="192" y="209">X</text></g>
        </svg>
      </div>
      <div class="tabs tabs-doc" role="tablist">
        <button class="tab tab-start" role="tab"><svg class="x"><use href="#close"/></svg>Start</button><button class="tab active tab-file" role="tab"><svg class="x"><use href="#close"/></svg><svg class="docpic"><use href="#doc"/></svg>smars_bas...</button>
      </div>
    </section>
  </main>

  <footer class="status">
    <span class="message">Valid, Internal name: Pocket</span>
    <button class="nav-style"><svg viewBox="0 0 18 18"><rect x="1" y="1" width="16" height="16" rx="3" fill="none" stroke="#2e3436" stroke-width="2"/><path d="M1 11H17M9 11V17" stroke="#2e3436" stroke-width="2"/></svg>Touchpad</button>
    <span class="dims">160.25 mm x 97.04 mm</span>
  </footer>
</div>
</body>
</html>
```
FILE: styles.css
```css
* { box-sizing: border-box; }

body {
  margin: 0;
  background: linear-gradient(#2b4d73, #0c1616);
  color: #000;
  font: 17px/24px Inter, "Liberation Sans", sans-serif;
}

button, select {
  margin: 0;
  padding: 0;
  border: 0;
  background: none;
  color: inherit;
  font: inherit;
}

h1, h2, ul { margin: 0; padding: 0; }

.sprite { position: absolute; width: 0; height: 0; }

.window {
  display: flex;
  flex-direction: column;
  min-height: 100vh;
  overflow: hidden;
  border-radius: 12px 12px 16px 16px;
  background: #ececec;
}

/* title bar */
.titlebar {
  display: grid;
  grid-template-columns: 1fr auto 1fr;
  align-items: center;
  height: 35px;
  padding: 0 10px 4px;
  background: #f3f4f6;
}
.titlebar h1 { color: #444; font-size: 18px; font-weight: 600; line-height: 20px; }
.lights { display: flex; gap: 11px; }
.light { width: 16px; height: 16px; border-radius: 50%; }
.light-close { background: radial-gradient(circle, #6a0d08 0 2px, #ec6a5e 3px); }
.light-min { background: #f4bf4f; }
.light-max { background: #61c554; }

/* toolbars */
.bar {
  display: flex;
  align-items: center;
  height: 48px;
  padding-top: 2px;
  border-top: 1px solid #f6f6f6;
  border-bottom: 2px solid #a8a8a8;
  background: linear-gradient(#ebebeb, #c9c9c9);
}
.bar:first-child { height: 47px; border-top-color: #d8d8d8; }
.grip {
  width: 12px;
  height: 28px;
  background: radial-gradient(circle at 9px 4px, #9a9a9a 1px, transparent 2px) 0 0 / 12px 8px;
}
.rule { width: 12px; height: 42px; background: repeating-linear-gradient(#777 0 2px, transparent 2px 4px) 5px 0 / 1px 100% no-repeat; }
.tool { display: flex; align-items: center; justify-content: center; width: 51px; height: 40px; }
.tool.tight { width: 50px; }
.tool svg, .pic, .docpic, .workbench-icon { width: 32px; height: 32px; stroke: #0e1f33; stroke-width: 3px; }
.tool.drop { justify-content: flex-start; gap: 2px; width: 63px; padding-left: 15px; }
.tool .caret { width: 10px; height: 8px; margin-top: 12px; color: #111; }
.tool.off svg { opacity: .5; }
.add { --body: #f5dd2a; --rim: #ee1c1c; --rim-dark: #8c0000; --coil: #f0d220; --coil-dark: #c4a000; }
.sub { --body: #dc1818; --rim: #6c9bd8; --rim-dark: #17345e; --coil: #5a89c8; --coil-dark: #204a87; }

.workbench { position: relative; width: 246px; margin: 0 11px 4px 11px; }
.workbench select {
  appearance: none;
  width: 100%;
  height: 27px;
  padding: 0 34px 0 38px;
  border-radius: 7px;
  background: #fff;
  box-shadow: 0 1px 2px #0005;
  color: #222;
  line-height: 27px;
}
.workbench-icon { position: absolute; top: 3px; left: 13px; width: 20px; height: 20px; }
.stepper {
  position: absolute;
  top: 3px;
  right: 3px;
  width: 21px;
  height: 21px;
  border-radius: 5px;
  background: linear-gradient(#2a8dff, #0a78ff);
  pointer-events: none;
}
.stepper svg { display: block; width: 21px; height: 21px; }

/* tabs */
.main { display: flex; flex: 1; }
.dock { display: flex; flex: 0 0 632px; flex-direction: column; border-right: 2px solid #9c9c9c; }
.tabs { display: flex; justify-content: center; height: 28px; }
.tab { height: 27px; background: #fff; color: #222; line-height: 28px; }
.tab:first-child { border-radius: 7px 0 0 7px; }
.tab:last-child { border-radius: 0 7px 7px 0; }
.tab.active { background: linear-gradient(#2a8dff, #007aff); color: #fff; }
.tab-model { width: 79px; }
.tab-tasks { width: 76px; padding-left: 4px; }
.tab-view { width: 69px; padding-right: 4px; }
.tab-data { width: 67px; }
.tabs-top { padding-top: 1px; background: linear-gradient(#ececec 14px, #dedede 14px 15px, #e4e4e4 15px); }
.tabs-bottom { background: linear-gradient(#e4e4e4 12px, #d8d8d8 12px 13px, #ececec 13px); }

.dock-title { display: grid; grid-template-columns: 550px 1fr; align-items: center; height: 25px; }
.dock-title h2 { font-size: 17px; font-weight: 400; text-align: center; }
.dock-buttons { display: flex; justify-content: flex-end; gap: 10px; margin-left: -20px; padding-right: 1px; }
.dock-buttons button { width: 22px; height: 22px; border: 1px solid #aaa; background: #e8e8e8; }
.dock-buttons svg { display: block; width: 20px; height: 20px; }

/* model tree */
.tree {
  flex: 1;
  display: grid;
  grid-template-rows: repeat(10, 1fr);
  padding: 0 0 76px;
  border: 1px solid #bdbdbd;
  background: #fff;
  list-style: none;
}
.tree li { display: flex; align-items: center; justify-self: start; }
.tree b { font-size: 18px; font-weight: 600; }
.tree .branch { width: 12px; height: 12px; margin: 0 8px; }
.lvl1 .branch, .lvl2 .branch { height: 8px; }
.lvl2 { padding-left: 27px; }
.lvl3 { padding-left: 54px; }
.node { display: flex; align-items: center; height: 26px; }
.pic { width: 22px; height: 22px; margin: 0 7px 0 1px; }
.lvl1 .node { padding-left: 4px; }
.lvl1 .pic { margin-right: 8px; }
.activebody { padding: 0 19px 0 7px; background: #e4e4ff; }
.lvl3 .node { padding: 0 19px 0 7px; }
.eye { width: 18px; height: 16px; }
.hid { color: #bfbfbf; }
.hid .pic { opacity: .5; }
.selected { background: #dcdcdc; }
.selected .eye { color: #34495e; }

.splitter { display: flex; align-items: center; justify-content: center; height: 12px; }
.splitter i { width: 8px; height: 8px; border-radius: 50%; background: #d2d2d2; }

/* property editor */
.props { padding: 3px 5px 7px 4px; background: #e4e4e4; }
.props-frame { height: 362px; overflow: hidden; border: 1px solid #bdbdbd; background: #fff; }
.props table { width: 100%; table-layout: fixed; border-spacing: 0; }
.c-exp { width: 26px; }
.c-name { width: 107px; }
.props th, .props td { height: 28px; padding: 0 0 0 8px; overflow: hidden; font-weight: 400; line-height: 26px; text-align: left; white-space: nowrap; }
.props td:first-child { padding-left: 11px; }
.props th { border-right: 1px solid #e0e0e0; border-bottom: 2px solid #e6e6e6; }
.props td:last-child { border-bottom: 2px solid #e6e6e6; }
.props .alt { background: #f4f5f5; }
.props .group th { padding-left: 7px; background: #bdbdbd; border-bottom-color: #d4d4d4; color: #fff; font-size: 18px; font-weight: 600; }
.expand { display: block; width: 8px; height: 12px; }

/* 3D view */
.mdi { display: flex; flex: 1; flex-direction: column; min-width: 0; }
.viewport { position: relative; flex: 1; margin-top: 1px; background: linear-gradient(#333365, #9898ac); }
.scene { position: absolute; inset: 0; width: 100%; height: 100%; }
.line { fill: none; stroke: #0c0c0c; stroke-width: 1px; }
.line .outline { stroke: #333; }
.navcube { position: absolute; top: 0; right: 0; width: 94px; height: 97px; }
.facename { fill: #8788b6; font-size: 16px; }
.axes { position: absolute; right: 0; bottom: 13px; width: 60px; height: 60px; }
.axisname { fill: #111; font-size: 18px; font-weight: 600; }

.tabs-doc { height: 29px; padding-top: 1px; background: linear-gradient(#e4e4e4 13px, #d8d8d8 13px 14px, #ececec 14px); }
.tabs-doc .tab { display: flex; align-items: center; }
.tab-start { width: 97px; padding-left: 6px; }
.tab-file { width: 240px; padding-left: 10px; }
.x { width: 12px; height: 12px; color: #555; }
.tab-start .x { margin-right: 10px; }
.active .x { color: #fff; }
.docpic { width: 22px; height: 22px; margin: 0 9px 0 18px; }

/* status bar */
.status {
  display: flex;
  align-items: center;
  height: 53px;
  padding: 0 48px 2px 3px;
  border-top: 2px solid #b0b0b0;
  background: linear-gradient(#e6e6e6, #b2b2b2);
}
.message { flex: 1; }
.nav-style { display: flex; align-items: center; gap: 10px; margin-right: 80px; }
.nav-style svg { width: 18px; height: 18px; }
```
